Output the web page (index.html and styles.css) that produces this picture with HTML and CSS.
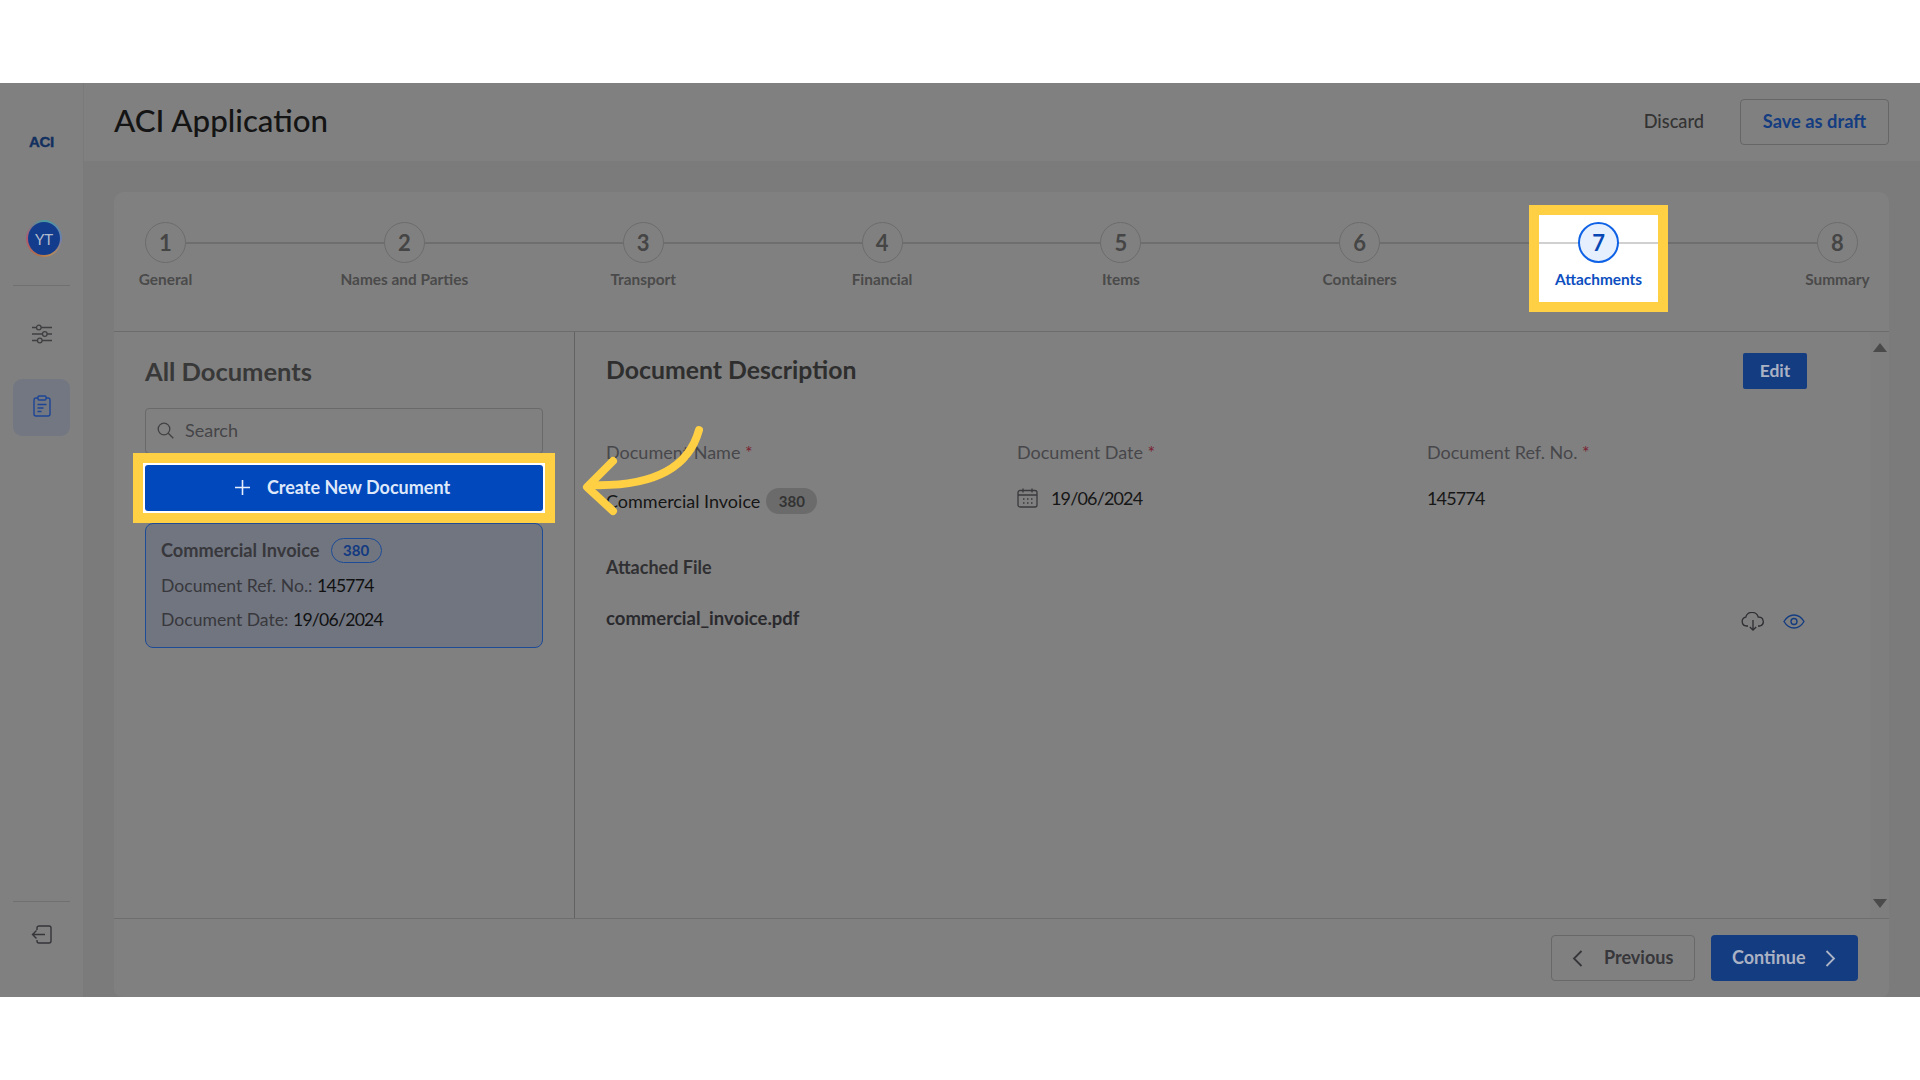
FILE: index.html
```html
<!DOCTYPE html>
<html lang="en">
<head>
<meta charset="utf-8">
<title>ACI Application</title>
<link rel="stylesheet" href="styles.css">
</head>
<body>
<div class="app">
  <aside class="sidebar">
    <div class="logo">ACI</div>
    <div class="avatar"><span class="avatar-in">YT</span></div>
    <div class="side-rule rule-top"></div>
    <svg class="ic-sliders" width="20" height="20" viewBox="0 0 20 20" fill="none" stroke="#3f3f42" stroke-width="1.3"><path d="M0 3.5h4.5M9 3.5h11M0 10h10.500M15 10h5M0 16.500h5.500M10 16.500h10"/><circle cx="6.800" cy="3.500" r="2.300"/><circle cx="12.800" cy="10" r="2.300"/><circle cx="7.800" cy="16.500" r="2.300"/></svg>
    <div class="side-active">
      <svg width="18" height="22" viewBox="0 0 18 22" fill="none" stroke="#1d4596" stroke-width="1.400"><path d="M5 3H3a2 2 0 0 0-2 2v14a2 2 0 0 0 2 2h12a2 2 0 0 0 2-2V5a2 2 0 0 0-2-2h-2"/><rect x="5" y="1" width="8" height="4" rx="1"/><path d="M4.500 9.500h9M4.500 13h6M4.500 16.500h4"/></svg>
    </div>
    <div class="side-fill"></div>
    <div class="side-rule"></div>
    <svg class="ic-logout" width="21" height="19" viewBox="0 0 21 19" fill="none" stroke="#35353a" stroke-width="1.400"><path d="M6 5V3a2 2 0 0 1 2-2h10a2 2 0 0 1 2 2v13a2 2 0 0 1-2 2H8a2 2 0 0 1-2-2v-1"/><path d="M14 9.500H1.500M5.500 5.500l-4 4 4 4"/></svg>
  </aside>
  <div class="workspace">
    <header class="topbar">
      <h1 class="title">ACI Application</h1>
      <div class="top-actions">
        <span class="discard">Discard</span>
        <span class="save">Save as draft</span>
      </div>
    </header>
    <section class="panel">
      <div class="stepper">
        <div class="step"><span class="dot">1</span><span class="step-label">General</span></div>
        <div class="step"><span class="dot">2</span><span class="step-label">Names and Parties</span></div>
        <div class="step"><span class="dot">3</span><span class="step-label">Transport</span></div>
        <div class="step"><span class="dot">4</span><span class="step-label">Financial</span></div>
        <div class="step"><span class="dot">5</span><span class="step-label">Items</span></div>
        <div class="step"><span class="dot">6</span><span class="step-label">Containers</span></div>
        <div class="step step-active"><span class="dot">7</span><span class="step-label">Attachments</span></div>
        <div class="step"><span class="dot">8</span><span class="step-label">Summary</span></div>
      </div>
      <div class="body">
        <div class="list-col">
          <h2 class="list-title">All Documents</h2>
          <div class="search">
            <svg width="17" height="17" viewBox="0 0 17 17" fill="none" stroke="#414144" stroke-width="1.300"><circle cx="7" cy="7" r="5.800"/><path d="M11.300 11.300l5 5"/></svg>
            <span>Search</span>
          </div>
          <div class="create-frame">
            <div class="create">
              <svg width="17" height="17" viewBox="0 0 17 17" fill="none" stroke="#e8eefc" stroke-width="1.600"><path d="M8.500 1v15M1 8.500h15"/></svg>
              <span>Create New Document</span>
            </div>
          </div>
          <div class="doc-card">
            <div class="doc-head"><span>Commercial Invoice</span><span class="code">380</span></div>
            <div class="doc-line">Document Ref. No.: <b>145774</b></div>
            <div class="doc-line">Document Date: <b>19/06/2024</b></div>
          </div>
        </div>
        <div class="detail">
          <div class="detail-main">
            <div class="detail-head">
              <h2 class="detail-title">Document Description</h2>
              <span class="edit">Edit</span>
            </div>
            <div class="fields">
              <div class="field-label">Document Name <i>*</i></div>
              <div class="field-label">Document Date <i>*</i></div>
              <div class="field-label">Document Ref. No. <i>*</i></div>
              <div class="value"><span>Commercial Invoice</span><span class="code-grey">380</span></div>
              <div class="value value-up">
                <svg width="21" height="20" viewBox="0 0 21 20" fill="none" stroke="#3a3a3e" stroke-width="1.300"><rect x="1" y="2.500" width="19" height="16.500" rx="2"/><path d="M1 7h19M6 .5v4M15 .5v4"/><path d="M6 11h1.500M10 11h1.500M14 11h1.500M6 15h1.500M10 15h1.500M14 15h1.500" stroke-width="1.500"/></svg>
                <span class="num">19/06/2024</span>
              </div>
              <div class="value value-up"><span class="num">145774</span></div>
            </div>
            <div class="attached">Attached File</div>
            <div class="file-row">
              <span class="file-name">commercial_invoice.pdf</span>
              <div class="file-icons">
                <svg width="24" height="19" viewBox="0 0 24 19" fill="none" stroke="#2e2e33" stroke-width="1.300"><path d="M7 14H5.500a4.500 4.500 0 0 1-.7-8.900A6.500 6.500 0 0 1 17.300 5.200 4.500 4.500 0 0 1 19 14h-2"/><path d="M12 8v10M8.800 15l3.200 3 3.200-3"/></svg>
                <svg width="22" height="15" viewBox="0 0 22 15" fill="none" stroke="#143c80" stroke-width="1.400"><path d="M1 7.500C3.500 3.300 7 1 11 1s7.500 2.300 10 6.500C18.500 11.700 15 14 11 14S3.500 11.700 1 7.500z"/><circle cx="11" cy="7.500" r="3"/></svg>
              </div>
            </div>
          </div>
          <div class="scrollbar">
            <span class="arrow-up"></span>
            <span class="arrow-down"></span>
          </div>
        </div>
      </div>
      <footer class="footer">
        <span class="btn-prev">
          <svg width="11" height="17" viewBox="0 0 11 17" fill="none" stroke="#35353a" stroke-width="1.800"><path d="M9.500 1L2 8.500 9.500 16"/></svg>
          <span class="btn-text">Previous</span>
        </span>
        <span class="btn-next">
          <span class="btn-text">Continue</span>
          <svg width="11" height="17" viewBox="0 0 11 17" fill="none" stroke="#adb5c6" stroke-width="1.800"><path d="M1.500 1L9 8.500 1.500 16"/></svg>
        </span>
      </footer>
    </section>
  </div>
  <svg class="pointer" width="130" height="95" viewBox="0 0 130 95" fill="none" stroke="#ffd044" stroke-width="8" stroke-linecap="round" stroke-linejoin="round"><path d="M119 5C108 45 70 62 10 60"/><path d="M33 36L7 62 33 86"/></svg>
</div>
</body>
</html>
```
FILE: styles.css
```css
* { box-sizing: border-box; }
html, body { margin: 0; padding: 0; }
body {
  background: #fff;
  width: 1920px;
  height: 1080px;
  padding-top: 83px;
  font-family: "Lato", "Open Sans", sans-serif;
  overflow: hidden;
}
h1, h2 { margin: 0; }

.app {
  position: relative;
  display: flex;
  height: 914px;
  background: #7b7b7b;
}

/* sidebar */
.sidebar {
  width: 84px;
  flex: none;
  display: flex;
  flex-direction: column;
  align-items: center;
  padding: 49px 0 53px;
  background: #808080;
  border-right: 1px solid #7a7a7a;
}
.logo {
  font-family: "Liberation Sans", sans-serif;
  font-weight: 700;
  font-size: 15px;
  line-height: 20px;
  letter-spacing: -.3px;
  color: #12305f;
  -webkit-text-stroke: .4px #12305f;
}
.avatar {
  margin: 68px 0 0 5px;
  width: 36px;
  height: 37px;
  padding: 2px;
  border-radius: 50%;
  background: conic-gradient(#4a9aa0, #6c7fb0 25%, #c08a50 45%, #b0704a 55%, #b05a70 75%, #4a9aa0);
}
.avatar-in {
  display: flex;
  width: 100%;
  height: 100%;
  align-items: center;
  justify-content: center;
  border-radius: 50%;
  background: #133d8c;
  color: #b3bccd;
  font-size: 15px;
}
.side-rule {
  width: 57px;
  height: 1px;
  background: #707070;
  flex: none;
}
.rule-top { margin-top: 28px; }
.ic-sliders { margin-top: 38px; flex: none; }
.side-active {
  margin-top: 35px;
  width: 57px;
  height: 57px;
  flex: none;
  display: flex;
  align-items: center;
  justify-content: center;
  padding-bottom: 3px;
  border-radius: 9px;
  background: #727782;
}
.side-fill { flex: 1; }
.ic-logout { margin-top: 23px; flex: none; }

/* top bar */
.workspace {
  flex: 1;
  min-width: 0;
  display: flex;
  flex-direction: column;
}
.topbar {
  height: 78px;
  flex: none;
  display: flex;
  align-items: center;
  justify-content: space-between;
  padding: 0 31px 0 30px;
  background: #808080;
}
.title {
  margin-bottom: 4px;
  font-size: 31.300px;
  font-weight: 500;
  color: #141414;
}
.top-actions {
  display: flex;
  align-items: center;
  gap: 36px;
}
.discard {
  margin-bottom: 2px;
  font-size: 18.200px;
  font-weight: 500;
  color: #333;
}
.save {
  width: 149px;
  height: 46px;
  padding-bottom: 2px;
  display: flex;
  align-items: center;
  justify-content: center;
  border: 1px solid #666;
  border-radius: 4px;
  font-size: 18.300px;
  font-weight: 700;
  color: #143c80;
}

/* panel */
.panel {
  margin: 31px 31px 0 30px;
  flex: 1;
  min-height: 0;
  display: flex;
  flex-direction: column;
  background: #808080;
  border-radius: 10px 10px 8px 8px;
}
.stepper {
  position: relative;
  height: 140px;
  flex: none;
  display: flex;
  justify-content: space-between;
  border-bottom: 1px solid #6c6c6c;
}
.stepper::before {
  content: "";
  position: absolute;
  left: 51px;
  right: 51px;
  top: 50px;
  height: 2px;
  background: #6e6e6e;
}
.step {
  position: relative;
  width: 103px;
  display: flex;
  flex-direction: column;
  align-items: center;
  padding-top: 30px;
}
.dot {
  position: relative;
  z-index: 1;
  width: 41px;
  height: 41px;
  display: flex;
  align-items: center;
  justify-content: center;
  border: 1.500px solid #6c6c6c;
  border-radius: 50%;
  background: #808080;
  color: #454545;
  font-size: 22px;
  font-weight: 700;
}
.step-label {
  position: relative;
  z-index: 1;
  margin-top: 6px;
  font-size: 15.400px;
  line-height: 20px;
  font-weight: 700;
  white-space: nowrap;
  color: #4a4a4a;
}
.step-active { z-index: 2; }
.step-active::before {
  content: "";
  position: absolute;
  left: -8px;
  right: -8px;
  top: 23px;
  height: 87px;
  background: #fff;
  box-shadow: 0 0 0 10px #ffd044;
}
.step-active::after {
  content: "";
  position: absolute;
  left: -8px;
  right: -8px;
  top: 50px;
  height: 2px;
  background: #d0d0d0;
}
.step-active .dot {
  border: 2px solid #0f62e6;
  background: #e6effd;
  color: #0747b5;
}
.step-active .step-label { color: #0d4fc0; }

.body {
  flex: 1;
  min-height: 0;
  display: flex;
}

/* document list */
.list-col {
  width: 461px;
  flex: none;
  padding: 26px 31px 0 31px;
  border-right: 1px solid #626262;
}
.list-title {
  height: 28px;
  margin-bottom: 2px;
  font-size: 25.500px;
  line-height: 26px;
  font-weight: 700;
  color: #383838;
}
.search {
  margin-top: 22px;
  height: 46px;
  display: flex;
  align-items: center;
  gap: 11px;
  padding: 0 11px 2px;
  border: 1px solid #696969;
  border-radius: 4px;
  font-size: 18px;
  color: #454548;
}
.create-frame {
  position: relative;
  z-index: 2;
  margin-top: 11px;
  height: 46px;
  background: #fff;
  box-shadow: 0 0 0 2px #fff;
  outline: 10px solid #ffd044;
  outline-offset: 2px;
}
.create {
  height: 46px;
  display: flex;
  align-items: center;
  justify-content: center;
  gap: 16px;
  padding: 0 4px 2px 0;
  border-radius: 3px;
  background: #0048bc;
  color: #dfe8fa;
  font-size: 18px;
  font-weight: 700;
}
.doc-card {
  margin-top: 12px;
  height: 125px;
  padding: 14px 15px 0;
  border: 1px solid #1d4b96;
  border-radius: 8px;
  background: #707580;
  color: #38383c;
  font-size: 17.600px;
}
.doc-head {
  display: flex;
  align-items: center;
  gap: 11px;
  font-weight: 700;
  font-size: 18.200px;
  line-height: 25px;
}
.code {
  width: 51px;
  height: 25px;
  display: flex;
  align-items: center;
  justify-content: center;
  border: 1px solid #1d4b96;
  border-radius: 13px;
  color: #133a80;
  font-size: 15px;
  font-weight: 700;
}
.doc-line {
  margin-top: 10px;
  line-height: 24px;
}
.doc-head + .doc-line { margin-top: 11px; }
.doc-line b {
  font-weight: 400;
  letter-spacing: -.75px;
  color: #111;
}

/* detail */
.detail {
  flex: 1;
  min-width: 0;
  display: flex;
}
.detail-main {
  flex: 1;
  min-width: 0;
  padding: 21px 63px 0 31px;
}
.detail-head {
  display: flex;
  align-items: center;
  justify-content: space-between;
  height: 36px;
}
.detail-title {
  margin-bottom: 3px;
  font-size: 24.800px;
  font-weight: 700;
  color: #2e2e2e;
}
.edit {
  width: 64px;
  height: 36px;
  padding-bottom: 2px;
  display: flex;
  align-items: center;
  justify-content: center;
  border-radius: 2px;
  background: #143c80;
  color: #aab2c4;
  font-size: 17.500px;
  font-weight: 700;
}
.fields {
  margin-top: 52px;
  display: grid;
  grid-template-columns: 411px 410px 1fr;
  row-gap: 24px;
}
.field-label {
  margin-top: -1px;
  font-size: 18px;
  line-height: 24px;
  color: #47474b;
}
.field-label i { font-style: normal; color: #7a2030; }
.value {
  display: flex;
  align-items: center;
  height: 26px;
  font-size: 18px;
  color: #161616;
}
.value-up { margin-top: -3px; gap: 13px; }
.num { letter-spacing: -.85px; }
.code-grey {
  margin-left: 6px;
  width: 51px;
  height: 26px;
  display: flex;
  align-items: center;
  justify-content: center;
  border-radius: 13px;
  background: #6b6b6b;
  color: #333;
  font-size: 15px;
  font-weight: 700;
}
.attached {
  margin-top: 41px;
  font-size: 18px;
  line-height: 24px;
  font-weight: 700;
  color: #303033;
}
.file-row {
  margin-top: 27px;
  display: flex;
  align-items: center;
  justify-content: space-between;
  height: 24px;
  padding-right: 2px;
}
.file-name {
  font-size: 18.500px;
  font-weight: 700;
  color: #2a2a2e;
}
.file-icons {
  display: flex;
  align-items: center;
  gap: 18px;
  margin-top: 7px;
}
.scrollbar {
  width: 19px;
  flex: none;
  display: flex;
  flex-direction: column;
  justify-content: space-between;
  align-items: center;
  padding: 11px 0 10px;
  background: #7e7e7e;
}
.arrow-up, .arrow-down {
  width: 0;
  height: 0;
  border-left: 7px solid transparent;
  border-right: 7px solid transparent;
}
.arrow-up { border-bottom: 9px solid #4a4a4a; }
.arrow-down { border-top: 9px solid #4a4a4a; }

/* footer */
.footer {
  height: 79px;
  flex: none;
  display: flex;
  justify-content: flex-end;
  gap: 16px;
  padding: 16px 31px 0 0;
  border-top: 1px solid #6e6e6e;
}
.btn-prev, .btn-next {
  height: 46px;
  display: flex;
  align-items: center;
  border-radius: 4px;
  font-size: 18px;
  font-weight: 700;
}
.btn-text { margin-bottom: 3px; }
.btn-prev {
  width: 144px;
  gap: 21px;
  padding-left: 20px;
  border: 1px solid #686868;
  color: #37373b;
}
.btn-next {
  width: 147px;
  gap: 19px;
  padding-left: 21px;
  background: #143c80;
  color: #aab2c4;
}

.pointer {
  position: absolute;
  left: 580px;
  top: 342px;
  z-index: 3;
}
```
